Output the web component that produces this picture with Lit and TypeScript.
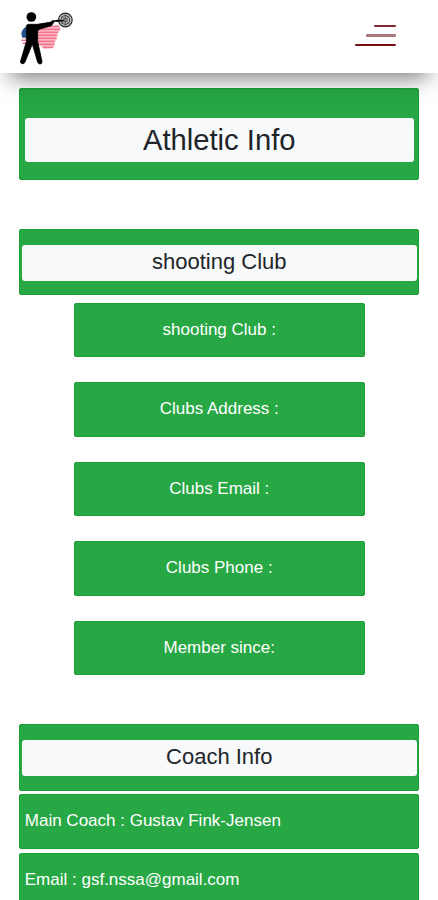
import { LitElement, html, css, svg } from "lit";
import { customElement } from "lit/decorators.js";

const CLUB_FIELDS = [
  "shooting Club :",
  "Clubs Address :",
  "Clubs Email :",
  "Clubs Phone :",
  "Member since:",
];

const COACH_FIELDS = ["Main Coach : Gustav Fink-Jensen", "Email : gsf.nssa@gmail.com"];

const STRIPES = [
  { y: 79, x1: 84, x2: 146 },
  { y: 88, x1: 84, x2: 151 },
  { y: 97, x1: 82, x2: 144 },
  { y: 106, x1: 82, x2: 140 },
  { y: 115, x1: 82, x2: 139 },
  { y: 124, x1: 82, x2: 134 },
  { y: 133, x1: 86, x2: 134 },
  { y: 142, x1: 98, x2: 129 },
];

@customElement("app-root")
export class AppRoot extends LitElement {
  static styles = css`
    :host {
      display: block;
      height: 900px;
      overflow: hidden;
      background: #fff;
      color: #212529;
      font-family: "Liberation Sans", Arial, sans-serif;
    }
    * {
      box-sizing: border-box;
    }
    .bar {
      position: relative;
      z-index: 1;
      display: flex;
      justify-content: space-between;
      height: 73px;
      padding: 0 42px 0 10px;
      background: #fff;
      box-shadow: 0 15px 22px -10px rgba(0, 0, 0, 0.52);
    }
    .logo {
      display: block;
      width: 73px;
      height: 73px;
    }
    .menu {
      display: flex;
      flex-direction: column;
      align-items: flex-end;
      padding: 24.6px 0 0;
      gap: 7.6px;
    }
    .line {
      height: 2.2px;
      border-radius: 1px;
      background: #80282b;
    }
    .short {
      width: 22px;
    }
    .middle {
      width: 30.5px;
      height: 3px;
      margin: -0.4px 0;
      background: #a97679;
    }
    .long {
      width: 41px;
      background: #7a1016;
    }
    .content {
      padding: 15.4px 18.7px 0 19.2px;
    }
    .panel {
      background: #28a745;
      border: 1px solid #1aa035;
      border-radius: 2px;
    }
    .title {
      height: 91.8px;
      padding: 29px 4.4px 0;
    }
    .section {
      height: 66.2px;
      margin-top: 49.1px;
      padding: 14.5px 1.6px 0;
    }
    h1,
    h2 {
      display: flex;
      justify-content: center;
      margin: 0;
      border-radius: 3px;
      background: #f8f9fa;
      font-weight: 400;
      white-space: nowrap;
    }
    h1 {
      height: 44px;
      line-height: 44.5px;
      font-size: 29.2px;
    }
    h2 {
      height: 36.2px;
      line-height: 33px;
      font-size: 22px;
    }
    .club {
      display: flex;
      flex-direction: column;
      gap: 25px;
      margin: 7.3px 54.6px 0;
    }
    .field {
      height: 54.5px;
      line-height: 52px;
      color: #fff;
      font-size: 17px;
      text-align: center;
    }
    .coach {
      display: flex;
      flex-direction: column;
      gap: 3.4px;
      margin-top: 3.2px;
    }
    .coach .field {
      height: 55.4px;
      padding-left: 4.6px;
      font-size: 17px;
      text-align: left;
    }
  `;

  private logo() {
    return html`
      <svg class="logo" viewBox="0 0 219 219" aria-hidden="true">
        <path
          d="M84 77 Q112 83 148 75 L152 86 L145 98 L140 121 L134 127 L131 144 L104 146 L84 132Z"
          fill="#fbc3cd"
        />
        ${STRIPES.map(
          (s) => svg`<path d="M${s.x1} ${s.y}H${s.x2}" stroke="#f5738b" stroke-width="5" />`,
        )}
        <path d="M49 80 Q35 87 34 102 L37 113 H51Z" fill="#24508d" />
        <path d="M34 121H51M38 130H50" stroke="#f36c86" stroke-width="4.5" />
        <circle cx="64" cy="51" r="14.5" fill="#000" />
        <path
          d="M56 73 H82 L120 67 L128 62 H150 V64 H134 L124 77 L90 87 L83 92 V124 L96 185 Q96 192 90 192 Q85 192 83 187 L67 132 L45 186 Q42 193 36 191 Q30 189 32 183 L49 125 V80 Q49 73 56 73Z"
          fill="#000"
          stroke="#000"
          stroke-width="2.5"
          stroke-linejoin="round"
        />
        <circle cx="166" cy="60" r="20.5" fill="#c4c4c4" stroke="#222" stroke-width="3.5" />
        <circle cx="166" cy="60" r="13" fill="none" stroke="#333" stroke-width="3" />
        <circle cx="166" cy="60" r="6" fill="none" stroke="#444" stroke-width="2.5" />
        <path
          d="M166 41V79M153 47L179 73M179 47L153 73"
          fill="none"
          stroke="#444"
          stroke-width="2"
        />
        <path d="M138 62H160" stroke="#000" stroke-width="5" />
      </svg>
    `;
  }

  render() {
    return html`
      <header class="bar">
        ${this.logo()}
        <div class="menu">
          <span class="line short"></span>
          <span class="line middle"></span>
          <span class="line long"></span>
        </div>
      </header>
      <main class="content">
        <div class="panel title"><h1>Athletic Info</h1></div>
        <div class="panel section"><h2>shooting Club</h2></div>
        <div class="club">
          ${CLUB_FIELDS.map((label) => html`<div class="panel field">${label}</div>`)}
        </div>
        <div class="panel section"><h2>Coach Info</h2></div>
        <div class="coach">
          ${COACH_FIELDS.map((label) => html`<div class="panel field">${label}</div>`)}
        </div>
      </main>
    `;
  }
}
